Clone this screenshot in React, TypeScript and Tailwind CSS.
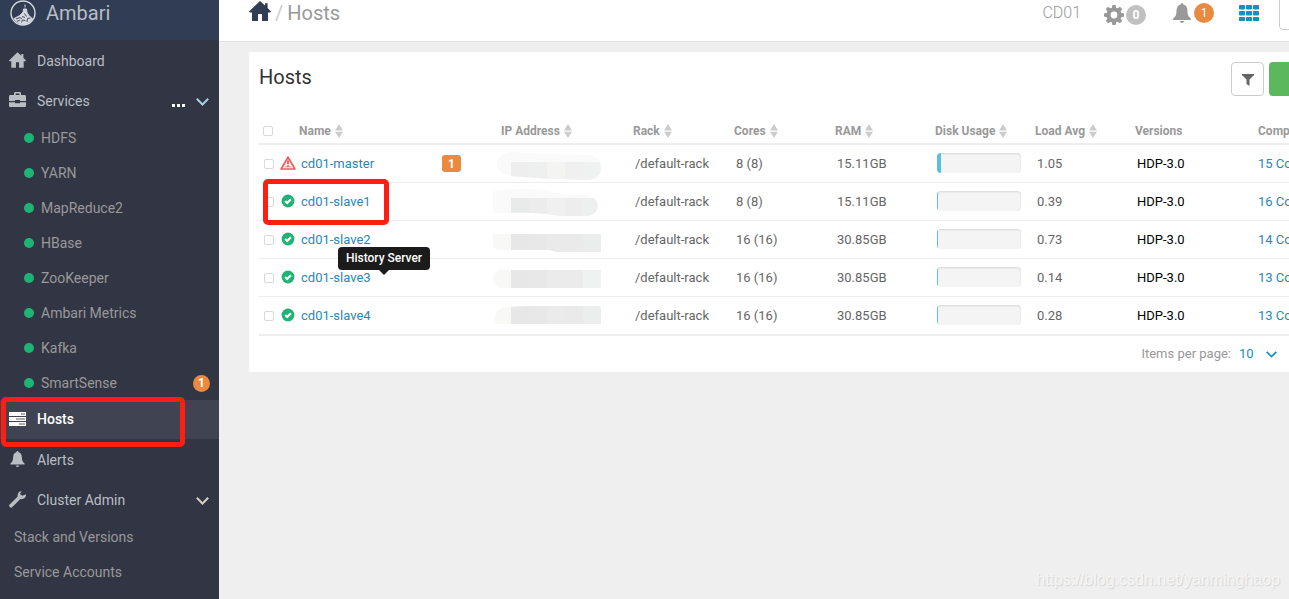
import React, { useState } from "react";

type IconProps = { className?: string };

const HomeIcon = ({ className }: IconProps) => (
  <svg viewBox="0 0 22 20" className={className} fill="currentColor" aria-hidden="true">
    <path d="M11 0 16 4.6V2.2h2.6v4.9L22 10.6l-.8 1H19V20h-6v-7H9v7H3v-8.4H.8l-.8-1z" />
  </svg>
);

const BriefcaseIcon = ({ className }: IconProps) => (
  <svg viewBox="0 0 17 16" className={className} fill="currentColor" aria-hidden="true">
    <path d="M5 3V1.2Q5 0 6.2 0h4.6Q12 0 12 1.2V3h3.6Q17 3 17 4.4V9h-6V8H6v1H0V4.4Q0 3 1.4 3zm1.6 0h3.8V1.5H6.6zM0 10.2h6v1h5v-1h6v3.9q0 .9-.9.9H.9Q0 15 0 14.1z" />
  </svg>
);

const TasksIcon = ({ className }: IconProps) => (
  <svg viewBox="0 0 17 14" className={className} aria-hidden="true">
    <path fill="currentColor" d="M0 0h17v4H0zM0 5h17v4H0zM0 10h17v4H0z" />
    <path stroke="#555864" strokeWidth="1" d="M12 2h4M7 7h9M10 12h6" />
  </svg>
);

const BellIcon = ({ className }: IconProps) => (
  <svg viewBox="0 0 18 20" className={className} fill="currentColor" aria-hidden="true">
    <path d="M9 0q1.4 0 1.4 1.6C13.4 2.3 14.4 5 14.5 8c.1 4 .9 5.600 3.200 7.200L18 17H0l.3-1.800C2.600 13.600 3.400 12 3.500 8c.1-3 1.100-5.700 4.100-6.400Q7.600 0 9 0zM6.800 18h4.400q-.4 2-2.200 2t-2.200-2z" />
  </svg>
);

const WrenchIcon = ({ className }: IconProps) => (
  <svg viewBox="0 0 17 17" className={className} fill="currentColor" aria-hidden="true">
    <path d="M12.600.3 10.900 3.100l2.500 1.700L17 3.300c.2 3.300-2.400 5.400-5.600 4.700L3.100 16.300q-.9.900-1.900 0l-.7-.7q-.9-1 0-1.900L8.700 5.600C8.100 2.300 10 .1 12.600.3z" />
  </svg>
);

const CogIcon = ({ className }: IconProps) => (
  <svg viewBox="-10 -10 20 20" className={className} aria-hidden="true">
    <circle r="5.500" fill="none" stroke="currentColor" strokeWidth="4.200" />
    {[0, 45, 90, 135].map((a) => (
      <path key={a} transform={`rotate(${a})`} fill="currentColor" d="M-1.600-10h3.200l.8 4h-4.800zM-1.600 10h3.200l.8-4h-4.800z" />
    ))}
  </svg>
);

const GridIcon = ({ className }: IconProps) => (
  <svg viewBox="0 0 20 16" className={className} fill="currentColor" aria-hidden="true">
    {[0, 7, 14].map((x) =>
      [0, 6, 12].map((y) => <rect key={`${x}-${y}`} x={x} y={y} width="6" height="4.500" rx=".8" />)
    )}
  </svg>
);

const FilterIcon = ({ className }: IconProps) => (
  <svg viewBox="0 0 12 12" className={className} fill="currentColor" aria-hidden="true">
    <path d="M0 0h12v1L7.500 5.500V12l-3-2V5.500L0 1z" />
  </svg>
);

const ChevronIcon = ({ className }: IconProps) => (
  <svg viewBox="0 0 13 8" className={className} fill="none" stroke="currentColor" strokeWidth="2" aria-hidden="true">
    <path d="M.8.8 6.500 6.500 12.200.8" />
  </svg>
);

const SortIcon = ({ className }: IconProps) => (
  <svg viewBox="0 0 8 14" className={className} fill="#cccccc" aria-hidden="true">
    <path d="M4 0 8 6.400H0zM0 7.800h8L4 14z" />
  </svg>
);

const WarningIcon = ({ className }: IconProps) => (
  <svg viewBox="0 0 16 14" className={className} aria-hidden="true">
    <path d="M8 1.200 14.900 13H1.100z" fill="none" stroke="#ef5b5b" strokeWidth="1.700" strokeLinejoin="round" />
    <path d="M8 4.600v3.600M8 9.200v1.600" stroke="#ef5b5b" strokeWidth="1.900" />
    <path d="M4.500 10.900h7" stroke="#ef5b5b" strokeWidth=".8" />
  </svg>
);

const OkIcon = ({ className }: IconProps) => (
  <svg viewBox="-7 -7 14 14" className={className} aria-hidden="true">
    <circle r="6.400" fill="#1eb475" />
    <path d="M-2.900 0-.8 2 2.900-1.800" fill="none" stroke="#fff" strokeWidth="2.200" />
  </svg>
);

const Logo = ({ className }: IconProps) => (
  <svg viewBox="0 0 26 26" className={className} fill="none" stroke="currentColor" aria-hidden="true">
    <circle cx="13" cy="13" r="12" strokeWidth="1.400" />
    <path d="M15 4.500v3M13.500 9h3l.4 3.500h-3.800z" fill="currentColor" strokeWidth="1" />
    <path d="M13 12 9.500 15.500 3.800 18.500Q7 24 13 24.600T22.600 18.500L19 15.500 16.900 12z" fill="currentColor" strokeWidth=".6" />
    <path d="m14.500 13.500 2 3M6 19l4-1.500 2 1.500M7 21.500l3-1.500M11.500 22.500l1-2.500 3 .5M17 22l.5-3.500 3-.5M12 16.500l3 1" stroke="#313d54" strokeWidth=".9" />
  </svg>
);

const services = ["HDFS", "YARN", "MapReduce2", "HBase", "ZooKeeper", "Ambari Metrics", "Kafka", "SmartSense"];

type Blob = { outline: string; top: number; bottom: number; left: string; tones: string[] };
type Host = {
  name: string;
  alerts?: number;
  cores: string;
  ram: string;
  disk: number;
  load: string;
  components: number;
  mask: Blob;
};

const hosts: Host[] = [
  {
    name: "cd01-master", alerts: 1, cores: "8 (8)", ram: "15.11GB", disk: 5, load: "1.05", components: 15,
    mask: { outline: "M22 7 60 9 100 10Q112 12 112 23T98 35L60 34 22 31Q8 29 8 19T22 7z", top: 17, bottom: 36, left: "#fafafa", tones: ["#eeeeee", "#eeefef", "#f4f4f2", "#f0f0f0", "#f0f2f1"] },
  },
  {
    name: "cd01-slave1", cores: "8 (8)", ram: "15.11GB", disk: 1, load: "0.39", components: 16,
    mask: { outline: "M4 8Q30 4 55 7 70 12 98 12 108 14 109 23 108 32 98 33L70 33Q50 29 20 30L4 30z", top: 15, bottom: 36, left: "#fafafa", tones: ["#e9ebea", "#ececec", "#f0f0f0", "#ededed", "#eeefef"] },
  },
  {
    name: "cd01-slave2", cores: "16 (16)", ram: "30.85GB", disk: 1, load: "0.73", components: 14,
    mask: { outline: "M4 13H112V31H68L60 29H12Q4 29 4 24z", top: 13, bottom: 31, left: "#f8f8f6", tones: ["#e7e7e7", "#e8e8e8", "#eaeaea", "#eaeaea", "#ebecec"] },
  },
  {
    name: "cd01-slave3", cores: "16 (16)", ram: "30.85GB", disk: 1, load: "0.14", components: 13,
    mask: { outline: "M10 11H112V29H10Q4 26 4 20T10 11z", top: 11, bottom: 29, left: "#f8f8f6", tones: ["#e7e7e7", "#e8e8e8", "#ebebeb", "#ebebeb", "#f0f2f1"] },
  },
  {
    name: "cd01-slave4", cores: "16 (16)", ram: "30.85GB", disk: 1, load: "0.28", components: 13,
    mask: { outline: "M16 10 40 9H108Q112 9 112 12V27H8Q5 24 6 19 8 11 16 10z", top: 9, bottom: 27, left: "#f8f8f6", tones: ["#e7e7e7", "#e8e8e8", "#ebebeb", "#eaeaea", "#ebeeed"] },
  },
];

const MaskedAddress = ({ id, mask }: { id: string; mask: Blob }) => (
  <svg viewBox="0 0 112 37" className="block h-[37px] w-28" aria-hidden="true">
    <clipPath id={id}>
      <path d={mask.outline} />
    </clipPath>
    <g clipPath={`url(#${id})`}>
      <rect width="112" height="37" fill={mask.left} />
      {mask.tones.map((tone, i) => (
        <rect key={i} x={22 + i * 18} y={mask.top} width="18" height={mask.bottom - mask.top} fill={tone} />
      ))}
    </g>
  </svg>
);

const rowLink = "flex items-center gap-[11px] pl-[9px] pr-[10px] text-sm text-[#b8bec4]";
const checkbox = "block size-[10px] appearance-none rounded-[2px] border border-[#d9d9d9] bg-white checked:bg-[#1491c1]";

function Sidebar() {
  return (
    <nav className="w-[219px] shrink-0 bg-[#323544]">
      <div className="h-10 bg-[#313d54]">
        <a href="#home" className="flex h-[26px] items-center gap-[10px] pl-[10px] text-xl text-[#b8bec4]">
          <Logo className="size-[26px] text-[#d5d8dc]" />
          Ambari
        </a>
      </div>
      <a href="#dashboard" className={`${rowLink} h-10`}>
        <HomeIcon className="h-4 w-[17px]" />
        <span className="pt-px">Dashboard</span>
      </a>
      <div className={`${rowLink} h-10`}>
        <BriefcaseIcon className="h-4 w-[17px]" />
        <a href="#services" className="pt-px">Services</a>
        <button type="button" aria-label="Service actions" className="ml-auto flex gap-[2px] pt-[10px]">
          <i className="size-[3px] bg-white" />
          <i className="size-[3px] bg-white" />
          <i className="size-[3px] bg-white" />
        </button>
        <button type="button" aria-label="Toggle services" className="pt-[3px]">
          <ChevronIcon className="h-2 w-[13px] text-[#a8d0e4]" />
        </button>
      </div>
      <ul>
        {services.map((s) => (
          <li key={s}>
            <a href={`#${s}`} className="flex h-[35px] items-center gap-[7px] pl-6 pr-[9px] pt-px text-sm text-[#999999]">
              <span className="size-[10px] rounded-full bg-[#1eb475]" />
              {s}
              {s === "SmartSense" && (
                <span className="ml-auto flex size-[17px] items-center justify-center rounded-full bg-[#e98a40] text-xs font-bold text-white">
                  1
                </span>
              )}
            </a>
          </li>
        ))}
      </ul>
      <div className="relative">
        <a href="#hosts" className={`${rowLink} h-[39px] bg-[#404351] pb-[2px]`}>
          <TasksIcon className="h-[14px] w-[17px] text-white" />
          <span className="font-medium text-white">Hosts</span>
        </a>
        <div className="pointer-events-none absolute -top-[3px] left-px h-[50px] w-[184px] rounded-[5px] border-[5px] border-[#ff1e12]" />
      </div>
      <a href="#alerts" className={`${rowLink} h-10`}>
        <BellIcon className="h-4 w-[17px]" />
        <span className="pt-px">Alerts</span>
      </a>
      <div className={`${rowLink} h-10`}>
        <WrenchIcon className="size-[17px]" />
        <a href="#admin" className="pt-px">Cluster Admin</a>
        <button type="button" aria-label="Toggle cluster admin" className="ml-auto pt-[3px]">
          <ChevronIcon className="h-2 w-[13px] text-[#d8cfc4]" />
        </button>
      </div>
      <a href="#stack" className="flex h-[35px] items-center pl-[14px] text-sm text-[#999999]">Stack and Versions</a>
      <a href="#accounts" className="flex h-[35px] items-center pl-[14px] text-sm text-[#999999]">Service Accounts</a>
    </nav>
  );
}

function TopBar() {
  return (
    <header className="flex h-[42px] items-start border-b border-[#e0e0e0] bg-white pl-[30px] pr-[10px] text-[#999999]">
      <div className="flex h-[26px] items-center gap-1 text-xl">
        <a href="#home" aria-label="Home" className="pb-1 text-[#313d54]">
          <HomeIcon className="h-5 w-[22px]" />
        </a>
        <span className="text-[#cccccc]">/</span>
        <span>Hosts</span>
      </div>
      <div className="ml-auto flex h-[26px] items-center">
        <span className="mr-[23px] text-base font-light">CD01</span>
        <button type="button" aria-label="Background operations" className="mr-[27px] flex items-center gap-[2px] pt-[3px]">
          <CogIcon className="size-5" />
          <span className="flex size-5 items-center justify-center rounded-full bg-[#c0c0c0] text-xs font-bold text-white">0</span>
        </button>
        <button type="button" aria-label="Alerts" className="mr-[25px] flex items-center gap-[3px]">
          <BellIcon className="h-5 w-[18px]" />
          <span className="flex size-5 items-center justify-center rounded-full bg-[#e98a40] text-xs text-white">1</span>
        </button>
        <button type="button" aria-label="Views" className="mr-5 text-[#1491c1]">
          <GridIcon className="h-4 w-5" />
        </button>
      </div>
      <button type="button" aria-label="User menu" className="-mt-2 h-[38px] w-[60px] rounded border border-[#cccccc] bg-white" />
    </header>
  );
}

const columns = [
  { label: "Name", pad: "pl-[22px]", sort: true },
  { label: "IP Address", pad: "pl-3", sort: true },
  { label: "Rack", pad: "pl-1", sort: true },
  { label: "Cores", pad: "pl-1", sort: true },
  { label: "RAM", pad: "pl-1", sort: true },
  { label: "Disk Usage", pad: "pl-1", sort: true },
  { label: "Load Avg", pad: "pl-1", sort: true },
  { label: "Versions", pad: "pl-1", sort: false },
  { label: "Components", pad: "pl-1", sort: false },
];

function HostTable() {
  return (
    <table className="w-full table-fixed border-collapse text-left text-[13px] text-[#666666]">
      <colgroup>
        <col className="w-[18px]" />
        <col className="w-[212px]" />
        <col className="w-[140px]" />
        <col className="w-[101px]" />
        <col className="w-[101px]" />
        <col className="w-[100px]" />
        <col className="w-[100px]" />
        <col className="w-[100px]" />
        <col className="w-[123px]" />
        <col />
      </colgroup>
      <thead>
        <tr className="h-7 border-b-2 border-[#eeeeee] text-xs text-[#999999]">
          <th className="p-0 pl-1 pt-[2px]">
            <input type="checkbox" aria-label="Select all hosts" className={checkbox} />
          </th>
          {columns.map((c) => (
            <th key={c.label} className={`p-0 pt-[2px] font-bold ${c.pad}`}>
              <span className="flex items-center gap-1 whitespace-nowrap">
                {c.label}
                {c.sort && <SortIcon className="h-[14px] w-2" />}
              </span>
            </th>
          ))}
        </tr>
      </thead>
      <tbody className="border-b-2 border-[#eeeeee]">
        {hosts.map((h) => (
          <tr key={h.name} className="h-[38px] border-b border-[#eeeeee] last:border-b-0">
            <td className="p-0 pl-[5px]">
              <input type="checkbox" aria-label={`Select ${h.name}`} className={checkbox} />
            </td>
            <td className="relative p-0 pl-[3px] pr-7">
              <div className="flex items-center">
                {h.alerts ? <WarningIcon className="mb-[2px] mr-[5px] h-[14px] w-4" /> : <OkIcon className="mb-[2px] mr-[6px] ml-px size-[14px]" />}
                <a href={`#${h.name}`} className="text-[#2a87b8]">{h.name}</a>
                {h.alerts && (
                  <span className="ml-auto flex h-[17px] w-[19px] items-center justify-center rounded-[3px] bg-[#e98a40] text-xs font-bold text-white">
                    {h.alerts}
                  </span>
                )}
              </div>
              {h.name === "cd01-slave1" && (
                <div className="pointer-events-none absolute -left-[14px] -top-[4px] z-10 h-[46px] w-[126px] rounded-[5px] border-[5px] border-[#ff1e12]" />
              )}
              {h.name === "cd01-slave3" && (
                <div role="tooltip" className="absolute -top-3 left-[61px] z-10 flex h-[23px] w-[92px] items-center justify-center whitespace-nowrap rounded bg-[#1b1b1b] pb-[2px] text-xs font-medium text-white">
                  History Server
                  <svg viewBox="0 0 10 5" className="absolute top-full h-[5px] w-[10px]" aria-hidden="true">
                    <path d="M0 0h10L5 5z" fill="#1b1b1b" />
                  </svg>
                </div>
              )}
            </td>
            <td className="p-0">
              <MaskedAddress id={`mask-${h.name}`} mask={h.mask} />
            </td>
            <td className="p-0 pl-[6px]">/default-rack</td>
            <td className="p-0 pl-[6px]">{h.cores}</td>
            <td className="p-0 pl-[6px]">{h.ram}</td>
            <td className="p-0 pb-[2px] pl-[6px] pr-[10px]">
              <div role="progressbar" aria-label="Disk usage" aria-valuenow={h.disk} className="h-5 overflow-hidden rounded bg-[#f4f4f4] shadow-[inset_0_1px_2px_rgba(0,0,0,0.12)]">
                <div className="h-full bg-[#5bc0de]" style={{ width: `${h.disk}%` }} />
              </div>
            </td>
            <td className="p-0 pl-[6px]">{h.load}</td>
            <td className="p-0 pl-[6px] text-black">HDP-3.0</td>
            <td className="whitespace-nowrap p-0 pl-1">
              <a href="#components" className="text-[#2a87b8]">{h.components} Components</a>
            </td>
          </tr>
        ))}
      </tbody>
    </table>
  );
}

export default function App() {
  const [size, setSize] = useState("10");
  return (
    <div className="relative flex min-h-screen overflow-hidden bg-[#efefef] font-['Roboto',sans-serif]">
      <Sidebar />
      <main className="min-w-0 flex-1 overflow-hidden">
        <div className="min-w-[1130px]">
          <TopBar />
          <section className="ml-[30px] mr-[10px] mt-[10px] bg-white pl-[10px] pt-[10px]">
            <div className="flex items-start gap-[5px] pr-[10px]">
              <h1 className="mr-auto pt-[1px] text-xl text-[#333333]">Hosts</h1>
              <button type="button" aria-label="Filter" className="flex h-[34px] w-[33px] items-center justify-center rounded border border-[#cccccc] pt-[2px] text-[#666666]">
                <FilterIcon className="size-3" />
              </button>
              <button type="button" aria-label="Actions" className="h-[34px] w-[60px] rounded bg-[#5cb85c]" />
            </div>
            <div className="pt-5">
              <HostTable />
            </div>
            <div className="flex h-9 items-center justify-end pr-[62px] text-[13px] text-[#999999]">
              <label htmlFor="page-size" className="pr-2">Items per page:</label>
              <span className="relative flex items-center">
                <select id="page-size" value={size} onChange={(e) => setSize(e.target.value)} className="w-[38px] appearance-none bg-transparent text-[#1491c1]">
                  <option>10</option>
                  <option>25</option>
                  <option>50</option>
                </select>
                <ChevronIcon className="pointer-events-none absolute right-0 h-[7px] w-[11px] text-[#1491c1]" />
              </span>
            </div>
          </section>
        </div>
      </main>
      <div className="pointer-events-none absolute bottom-[7px] right-[9px] font-['Liberation_Sans',Arial,sans-serif] text-base text-[#f5f5f5] [text-shadow:1px_1px_1px_#d4d4d4]">
        https://blog.csdn.net/yanminghaop
      </div>
    </div>
  );
}
